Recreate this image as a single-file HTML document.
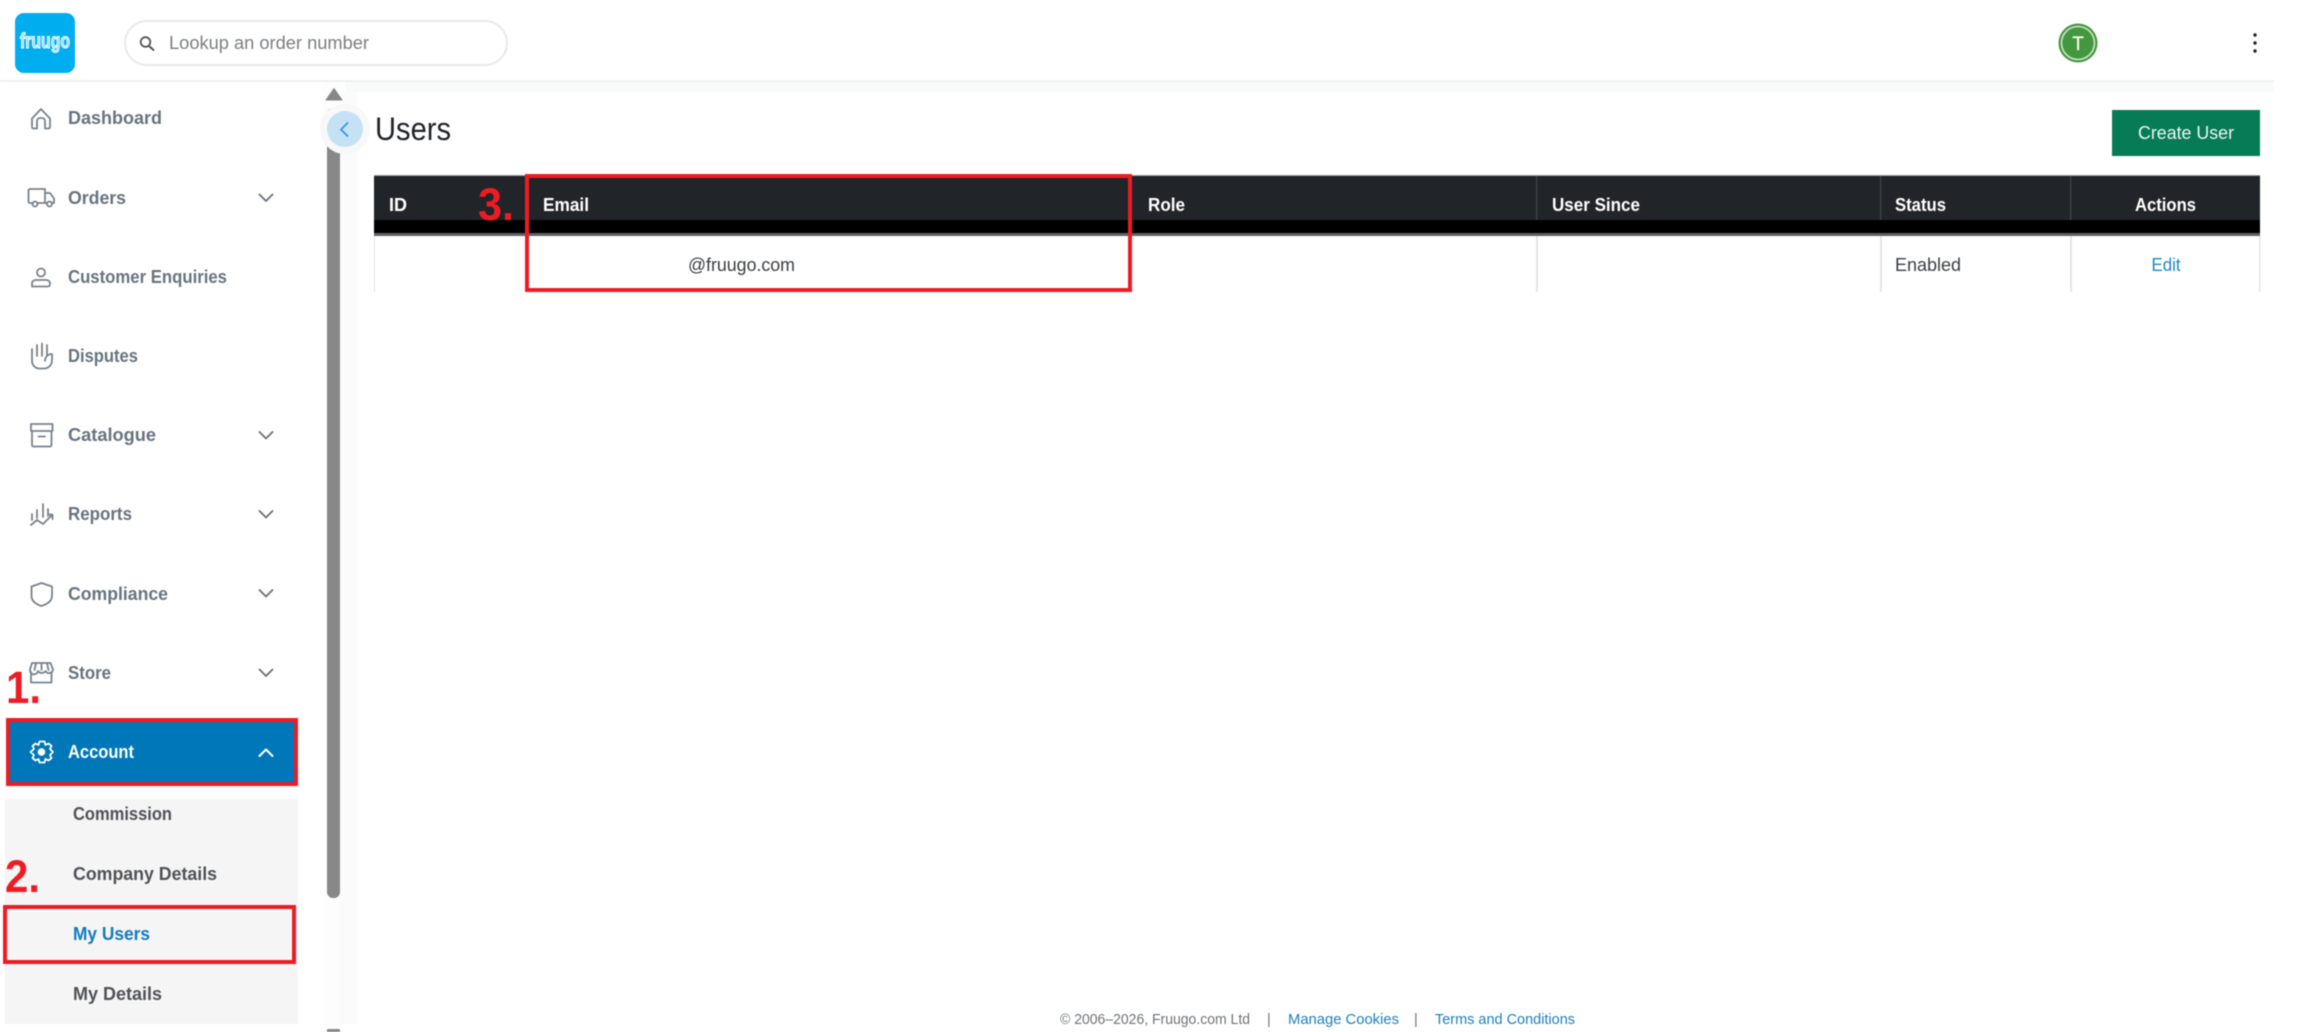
<!DOCTYPE html>
<html lang="en">
<head>
<meta charset="utf-8">
<title>Users</title>
<style>
html,body{margin:0;padding:0;background:#fff;width:2301px;height:1032px;overflow:hidden}
svg{display:block;position:absolute;left:0;top:0;filter:blur(.4px)}
text{font-family:"Liberation Sans",sans-serif}
.nav{font-size:18px;font-weight:700;fill:#68747f}
.sub{font-size:18px;font-weight:700;fill:#4f5257}
.th{font-size:18px;font-weight:700;fill:#fff}
.td{font-size:18px;fill:#3a3f45}
.foot{font-size:14.5px;fill:#6f7478}
.link{font-size:14.5px;fill:#1e81bd}
.ic{fill:none;stroke:#78838d;stroke-width:1.8;stroke-linecap:round;stroke-linejoin:round}
.chev{fill:none;stroke:#68747f;stroke-width:1.9;stroke-linecap:round;stroke-linejoin:round}
.num{font-size:45px;font-weight:700;fill:#ed1c24}
</style>
</head>
<body>
<svg width="2301" height="1032" viewBox="0 0 2301 1032" xmlns="http://www.w3.org/2000/svg">
<rect width="2301" height="1032" fill="#fff"/>

<!-- header band -->
<rect x="345" y="82" width="1929" height="10" fill="#f9fafa"/>
<rect x="0" y="80" width="2274" height="2" fill="#eef1f2"/>

<!-- logo -->
<rect x="15" y="13" width="60" height="60" rx="9" fill="#00aeef"/>
<text x="20" y="48" font-size="21" font-weight="700" fill="#8fdcf8" stroke="#fff" stroke-width="1" textLength="50" lengthAdjust="spacingAndGlyphs">fruugo</text>

<!-- search -->
<rect x="125" y="21" width="382" height="44" rx="22" fill="#fff" stroke="#e7eaec" stroke-width="2"/>
<circle cx="145.500" cy="42" r="4.800" fill="none" stroke="#555" stroke-width="1.800"/>
<path d="M149 46L154 50.500" fill="none" stroke="#555" stroke-width="2"/>
<text x="169" y="49" font-size="18.500" fill="#7a7f84" textLength="200" lengthAdjust="spacingAndGlyphs">Lookup an order number</text>

<!-- avatar -->
<circle cx="2078" cy="43" r="19.500" fill="#43983f"/>
<circle cx="2078" cy="43" r="16.500" fill="none" stroke="#cfe6cc" stroke-width="1.600"/>
<text x="2078" y="50" font-size="19" fill="#fbfde8" stroke="#fbfde8" stroke-width=".3" text-anchor="middle">T</text>

<!-- kebab -->
<circle cx="2255" cy="35" r="1.700" fill="#222"/>
<circle cx="2255" cy="43" r="1.700" fill="#222"/>
<circle cx="2255" cy="51" r="1.700" fill="#222"/>

<!-- scrollbar region -->
<rect x="340" y="92" width="17" height="932" fill="#fbfbfb"/>
<rect x="323" y="82" width="17" height="950" fill="#fdfdfd"/>
<path d="M334 88.500L342 100H326Z" fill="#888" stroke="#888" stroke-width="1" stroke-linejoin="round"/>
<rect x="327" y="108" width="13" height="790" rx="6" fill="#888"/>
<path d="M327 1032V1030Q327 1029 328 1029H339Q340 1029 340 1030V1032Z" fill="#888"/>

<!-- collapse button -->
<circle cx="345" cy="129" r="25" fill="#f8f8f8"/>
<circle cx="345" cy="129" r="18" fill="#c5e2f5"/>
<path d="M347.500 123L341 129.500L347.500 136" fill="none" stroke="#3b9ae6" stroke-width="1.900" stroke-linecap="round" stroke-linejoin="round"/>

<!-- nav icons -->
<path class="ic" d="M32 118.500L41 109L50 118.500V127A1.500 1.500 0 0 1 48.500 128.500H45V121A3 3 0 0 0 42 118H40A3 3 0 0 0 37 121V128.500H33.500A1.500 1.500 0 0 1 32 127Z"/>
<path class="ic" d="M33 203H30A1.500 1.500 0 0 1 28.500 201.500V190.500A1.500 1.500 0 0 1 30 189H45V203H37M45 193H50L54 198.500V203H51.500M45 203H47"/>
<circle class="ic" cx="35" cy="204" r="2.500"/><circle class="ic" cx="49.500" cy="204" r="2.500"/>
<circle class="ic" cx="41" cy="272.500" r="4"/>
<path class="ic" d="M32 286.500V283.500A3.500 3.500 0 0 1 35.500 280H46.500A3.500 3.500 0 0 1 50 283.500V284.500A2 2 0 0 1 48 286.500Z"/>
<path class="ic" d="M32 349V361A7.500 7.500 0 0 0 39.500 368.500H44A8 8 0 0 0 52 360.500V354M37 345V356M42 343.500V356M47 345V356M52 354C48 354 45 357 45 361"/>
<path class="ic" d="M31 424H52.500V431H31ZM32 431V445A1.500 1.500 0 0 0 33.500 446.500H50A1.500 1.500 0 0 0 51.500 445V431M38.500 436.500H45"/>
<path class="ic" d="M43 504V517M37 510V518M32 514V520M48 509V516M31 525L37 520L43 524L52 515M48 514.500H52.500V519"/>
<path class="ic" d="M41.500 583L52 586.500V596C52 601 47.500 604 41.500 606C35.500 604 31.500 601 31.500 596V586.500Z"/>
<path class="ic" d="M31 672V682.500H51.500V672M32 663H50.500L53 669.500A4 4 0 0 1 45.500 671A4.500 4.500 0 0 1 38 671A4 4 0 0 1 30 669.500ZM36 663L34.500 670M41.500 663V670M47 663L48.500 670"/>

<!-- nav labels -->
<text class="nav" x="68" y="124" textLength="94" lengthAdjust="spacingAndGlyphs">Dashboard</text>
<text class="nav" x="68" y="204" textLength="58" lengthAdjust="spacingAndGlyphs">Orders</text>
<text class="nav" x="68" y="283" textLength="159" lengthAdjust="spacingAndGlyphs">Customer Enquiries</text>
<text class="nav" x="68" y="362" textLength="70" lengthAdjust="spacingAndGlyphs">Disputes</text>
<text class="nav" x="68" y="441" textLength="88" lengthAdjust="spacingAndGlyphs">Catalogue</text>
<text class="nav" x="68" y="520" textLength="64" lengthAdjust="spacingAndGlyphs">Reports</text>
<text class="nav" x="68" y="600" textLength="100" lengthAdjust="spacingAndGlyphs">Compliance</text>
<text class="nav" x="68" y="679" textLength="43" lengthAdjust="spacingAndGlyphs">Store</text>

<!-- chevrons -->
<path class="chev" d="M259.500 194.500L266 201L272.500 194.500"/>
<path class="chev" d="M259.500 432L266 438.500L272.500 432"/>
<path class="chev" d="M259.500 511L266 517.500L272.500 511"/>
<path class="chev" d="M259.500 590L266 596.500L272.500 590"/>
<path class="chev" d="M259.500 669.500L266 676L272.500 669.500"/>

<!-- Account (active) -->
<rect x="8" y="720" width="288" height="64" fill="#0077b8" stroke="#ed1c24" stroke-width="4"/>
<path d="M41 741.500L44.500 741.500L45.500 745L48.500 743.500L51.500 746L50 749L53 752L50 755L51.500 758L48.500 760.500L45.500 759L44.500 762.500H39.500L38.500 759L35.500 760.500L32.500 758L34 755L30.500 752L34 749L32.500 746L35.500 743.500L38.500 745L39.500 741.500Z" fill="none" stroke="#fff" stroke-width="1.800" stroke-linejoin="round"/>
<circle cx="41.500" cy="752" r="3.800" fill="#fff"/>
<text x="68" y="758" font-size="18" font-weight="700" fill="#fff" textLength="66" lengthAdjust="spacingAndGlyphs">Account</text>
<path d="M259.500 756L266 749.500L272.500 756" fill="none" stroke="#fff" stroke-width="2" stroke-linecap="round" stroke-linejoin="round"/>

<!-- submenu -->
<rect x="5" y="799" width="293" height="225" fill="#f5f5f5"/>
<text class="sub" x="73" y="820" textLength="99" lengthAdjust="spacingAndGlyphs">Commission</text>
<text class="sub" x="73" y="880" textLength="144" lengthAdjust="spacingAndGlyphs">Company Details</text>
<text x="73" y="940" font-size="18" font-weight="700" fill="#0f7cc0" textLength="77" lengthAdjust="spacingAndGlyphs">My Users</text>
<text class="sub" x="73" y="1000" textLength="89" lengthAdjust="spacingAndGlyphs">My Details</text>
<rect x="5" y="907" width="289" height="55" fill="none" stroke="#ed1c24" stroke-width="4"/>

<!-- annotation numbers -->
<text class="num" x="6" y="703" textLength="35" lengthAdjust="spacingAndGlyphs">1.</text>
<text class="num" x="5" y="892" textLength="35" lengthAdjust="spacingAndGlyphs">2.</text>

<!-- title + button -->
<text x="375" y="140" font-size="32" fill="#212529" textLength="76" lengthAdjust="spacingAndGlyphs">Users</text>
<rect x="2112" y="110" width="148" height="46" fill="#067b55"/>
<text x="2138" y="139" font-size="18.500" fill="#eef7f3" textLength="96" lengthAdjust="spacingAndGlyphs">Create User</text>

<!-- table -->
<rect x="374" y="175" width="1886" height="1" fill="#9a9d9f"/>
<rect x="374" y="176" width="1886" height="44" fill="#212529"/>
<rect x="374" y="220" width="1886" height="13" fill="#000"/>
<rect x="374" y="233" width="1886" height="3" fill="#5c6268"/>
<rect x="1536" y="176" width="1.500" height="44" fill="#3b4045"/>
<rect x="1880" y="176" width="1.500" height="44" fill="#3b4045"/>
<rect x="2070" y="176" width="1.500" height="44" fill="#3b4045"/>
<rect x="374" y="236" width="1" height="56" fill="#e2e5e8"/>
<rect x="1536" y="236" width="2" height="56" fill="#e2e5e8"/>
<rect x="1880" y="236" width="2" height="56" fill="#e2e5e8"/>
<rect x="2070" y="236" width="2" height="56" fill="#e2e5e8"/>
<rect x="2259" y="236" width="1.500" height="56" fill="#e2e5e8"/>

<text class="th" x="389" y="211" textLength="18" lengthAdjust="spacingAndGlyphs">ID</text>
<text class="th" x="543" y="211" textLength="46" lengthAdjust="spacingAndGlyphs">Email</text>
<text class="th" x="1148" y="211" textLength="37" lengthAdjust="spacingAndGlyphs">Role</text>
<text class="th" x="1552" y="211" textLength="88" lengthAdjust="spacingAndGlyphs">User Since</text>
<text class="th" x="1895" y="211" textLength="51" lengthAdjust="spacingAndGlyphs">Status</text>
<text class="th" x="2135" y="211" textLength="61" lengthAdjust="spacingAndGlyphs">Actions</text>

<text class="td" x="688" y="271" textLength="107" lengthAdjust="spacingAndGlyphs">@fruugo.com</text>
<text class="td" x="1895" y="271" textLength="66" lengthAdjust="spacingAndGlyphs">Enabled</text>
<text x="2151.500" y="271" font-size="18" fill="#1e88c9" textLength="29" lengthAdjust="spacingAndGlyphs">Edit</text>

<!-- annotation box 3 -->
<rect x="527" y="176" width="603" height="114" fill="none" stroke="#ed1c24" stroke-width="4"/>
<text class="num" x="478" y="220" textLength="36" lengthAdjust="spacingAndGlyphs">3.</text>

<!-- footer -->
<text class="foot" x="1060" y="1024" textLength="190" lengthAdjust="spacingAndGlyphs">© 2006–2026, Fruugo.com Ltd</text>
<text class="foot" x="1267" y="1024">|</text>
<text class="link" x="1288" y="1024" textLength="111" lengthAdjust="spacingAndGlyphs">Manage Cookies</text>
<text class="foot" x="1414" y="1024">|</text>
<text class="link" x="1435" y="1024" textLength="140" lengthAdjust="spacingAndGlyphs">Terms and Conditions</text>
</svg>
</body>
</html>
